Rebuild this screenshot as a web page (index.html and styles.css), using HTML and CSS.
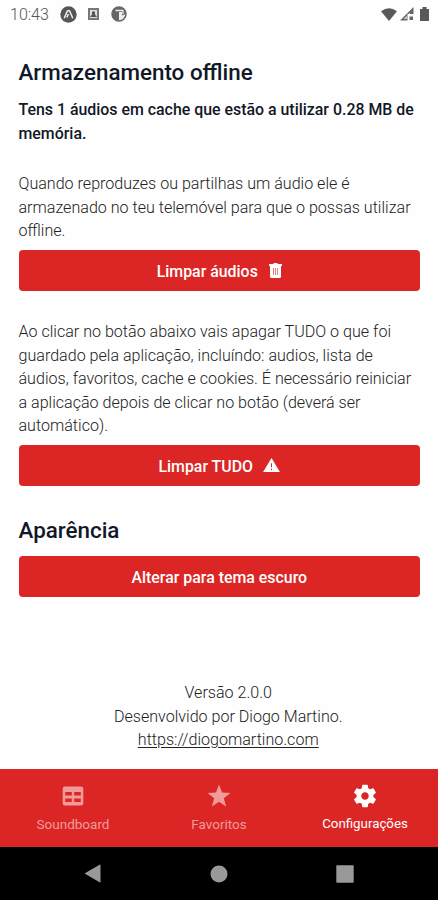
FILE: index.html
```html
<!DOCTYPE html>
<html lang="pt">
<head>
    <meta charset="UTF-8">
    <title>Configurações</title>
    <link rel="stylesheet" href="styles.css">
</head>
<body>
<!-- Barra de estado -->
<header class="status-bar">
    <span class="clock">10:43</span>
    <svg class="status-icon" width="17" height="17" viewBox="0 0 17 17">
        <circle cx="8.5" cy="8.5" r="8.2" fill="#555"/>
        <path d="M4.2 12.3 7.3 5.2Q8.5 3.8 9.7 5.2L12.8 12.3M8.5 8 6.8 11.5" fill="none" stroke="#eee" stroke-width="1.5"/>
    </svg>
    <svg class="status-icon square" width="11" height="12" viewBox="0 0 11 12">
        <rect x="1" y="1" width="9" height="10" fill="#ddd" stroke="#777" stroke-width="2"/>
        <path d="M2 9 4 6.500 4 4 5.500 3 7 4 7 6.500 9 9Z" fill="#555"/>
    </svg>
    <svg class="status-icon" width="16" height="16" viewBox="0 0 16 16">
        <circle cx="8" cy="8" r="7" fill="#eee" stroke="#666" stroke-width="1.5"/>
        <path d="M8 1A7 7 0 0 0 8 15V6H11V9.500L15 8A7 7 0 0 0 8 1Z" fill="#666"/>
        <path d="M4.500 4.500H12V8" fill="none" stroke="#eee" stroke-width="1.300"/>
    </svg>
    <div class="signals">
        <svg width="16" height="13" viewBox="0 0 16 13"><path d="M0 3.200Q8-2.800 16 3.200L8 13Z" fill="#595959"/></svg>
        <svg width="14" height="14" viewBox="0 0 14 14"><path d="M0 13.500 13.500 0V7H7.500V13.500Z" fill="#666"/><path d="M3.500 12 10 5.500V8H7V12Z" fill="#fff" opacity=".65"/><rect x="9.500" y="9.500" width="3.500" height="3.500" fill="#666"/></svg>
        <svg width="9" height="14" viewBox="0 0 9 14"><path d="M0 2H2.500V0H6.500V2H9V14H0Z" fill="#595959"/></svg>
    </div>
</header>

<!-- Conteúdo principal -->
<main class="content">
    <h2>Armazenamento offline</h2>
    <p class="cache-info">Tens 1 áudios em cache que estão a utilizar 0.28 MB de<br>memória.</p>
    <p>Quando reproduzes ou partilhas um áudio ele é<br>armazenado no teu telemóvel para que o possas utilizar<br>offline.</p>
    <button class="button">
        <span>Limpar áudios</span>
        <svg class="trash" width="13" height="15" viewBox="0 0 13 15">
            <path d="M0 1H4L5 0H8L9 1H13V3H12V13.500Q12 15 10.500 15H2.500Q1 15 1 13.500V3H0Z" fill="#fff"/>
            <path d="M4.500 5V12M6.500 5V12M8.500 5V12" stroke="#dc2626" stroke-width=".6"/>
        </svg>
    </button>
    <p class="reset-info">Ao clicar no botão abaixo vais apagar TUDO o que foi<br>guardado pela aplicação, incluíndo: audios, lista de<br>áudios, favoritos, cache e cookies. É necessário reiniciar<br>a aplicação depois de clicar no botão (deverá ser<br>automático).</p>
    <button class="button">
        <span>Limpar TUDO</span>
        <svg class="warning" width="17" height="14" viewBox="0 0 18 15">
            <path d="M9 0 18 15H0Z" fill="#fff"/>
            <path d="M9 5.500V10M9 11.500V13" stroke="#dc2626" stroke-width="1.100"/>
        </svg>
    </button>
    <h2 class="appearance">Aparência</h2>
    <button class="button"><span>Alterar para tema escuro</span></button>
    <footer class="about">
        <div>Versão 2.0.0</div>
        <div>Desenvolvido por Diogo Martino.</div>
        <a href="https://diogomartino.com">https://diogomartino.com</a>
    </footer>
</main>

<!-- Separadores -->
<nav class="tabs">
    <a class="tab" href="#">
        <svg width="24" height="24" viewBox="0 0 24 24"><path fill-rule="evenodd" d="M4 2.500H20Q22.300 2.500 22.300 4.800V19.200Q22.300 21.500 20 21.500H4Q1.700 21.500 1.700 19.200V4.800Q1.700 2.500 4 2.500ZM4.200 8V11.500H10.800V8ZM13.200 8V11.500H19.800V8ZM4.200 14.500V18H10.800V14.500ZM13.200 14.500V18H19.800V14.500Z" fill="currentColor"/></svg>
        <span>Soundboard</span>
    </a>
    <a class="tab" href="#">
        <svg width="24" height="24" viewBox="0 0 24 24"><path d="M12 .5 15 8.600 23.500 9 16.800 14.200 19.100 22.500 12 17.700 4.900 22.500 7.200 14.200.5 9 9 8.600Z" fill="currentColor"/></svg>
        <span>Favoritos</span>
    </a>
    <a class="tab active" href="#">
        <svg width="28" height="28" viewBox="0 0 24 24"><path d="M19.140 12.940c.04-.3.060-.61.060-.94 0-.32-.02-.64-.07-.94l2.030-1.580c.18-.14.230-.41.120-.61l-1.920-3.320c-.12-.22-.37-.29-.59-.22l-2.390.960c-.5-.38-1.030-.7-1.620-.94l-.36-2.540c-.04-.24-.24-.41-.48-.41h-3.840c-.24 0-.43.170-.47.410l-.36 2.540c-.59.240-1.130.570-1.620.940l-2.390-.96c-.22-.08-.47 0-.59.220L2.740 8.870c-.12.210-.08.470.120.610l2.030 1.580c-.05.300-.09.630-.09.940s.02.640.07.940l-2.030 1.580c-.18.140-.23.410-.12.610l1.920 3.320c.12.220.37.290.59.220l2.390-.96c.5.380 1.030.700 1.620.940l.36 2.540c.05.240.240.410.480.410h3.840c.24 0 .44-.17.470-.41l.36-2.540c.59-.24 1.130-.56 1.620-.94l2.390.960c.22.080.47 0 .59-.22l1.920-3.320c.12-.22.070-.47-.12-.61zM12 15.200c-1.760 0-3.200-1.440-3.200-3.200s1.440-3.200 3.200-3.200 3.200 1.440 3.200 3.200-1.440 3.200-3.200 3.200z" fill="currentColor"/></svg>
        <span>Configurações</span>
    </a>
</nav>

<!-- Navegação do sistema -->
<div class="system-nav">
    <svg width="17" height="19" viewBox="0 0 17 19"><path d="M16 .5Q16.500.5 16.500 1V18Q16.500 18.500 16 18.500L.5 9.500Z" fill="#999"/></svg>
    <svg width="18" height="18" viewBox="0 0 18 18"><circle cx="9" cy="9" r="8.500" fill="#999"/></svg>
    <svg width="18" height="18" viewBox="0 0 18 18"><rect x=".3" y=".3" width="17.400" height="17.400" rx="1" fill="#999"/></svg>
</div>
</body>
</html>
```
FILE: styles.css
```css
* {
    box-sizing: border-box;
}

body {
    margin: 0;
    height: 900px;
    display: flex;
    flex-direction: column;
    overflow: hidden;
    background-color: #fefefe;
    font-family: Roboto, sans-serif;
    white-space: nowrap;
}

/* Barra de estado */
.status-bar {
    height: 28px;
    display: flex;
    align-items: center;
    padding: 0 9px 0 10px;
}

.clock {
    width: 50px;
    font-size: 16px;
    font-weight: 300;
    color: #555;
}

.square {
    margin: 0 12px 0 11px;
}

.signals {
    display: flex;
    align-items: center;
    gap: 3px;
    margin-left: auto;
}

.signals svg:last-child {
    margin-left: 3px;
}

/* Conteúdo principal */
.content {
    flex: 1;
    padding: 31px 18px 0 18.5px;
}

h2 {
    margin: 0;
    font-size: 22.4px;
    line-height: 27px;
    font-weight: 500;
    color: #111827;
}

p {
    margin: 0;
    font-size: 16.08px;
    line-height: 23.6px;
    font-weight: 300;
    color: #222;
}

.cache-info {
    margin: 12px 0 27px;
    font-size: 15.9px;
    font-weight: 500;
    color: #111827;
}

.button {
    display: flex;
    align-items: center;
    justify-content: center;
    gap: 11px;
    width: 100%;
    height: 41px;
    margin: 7px 0 0;
    padding: 2px 0 0;
    border: none;
    border-radius: 4px;
    background-color: #dc2626;
    color: #fff;
    font-family: inherit;
    font-size: 15.9px;
    font-weight: 500;
}

.warning {
    margin: -2px 0 0 -1px;
}

.trash {
    margin-top: -2px;
}

.reset-info {
    margin-top: 29px;
}

.appearance {
    margin-top: 31px;
}

.appearance + .button {
    margin-top: 12px;
}

.about {
    display: flex;
    flex-direction: column;
    align-items: center;
    margin-top: 84px;
    padding-left: 18px;
    font-size: 16.08px;
    line-height: 23.6px;
    font-weight: 300;
    color: #222;
}

.about a {
    color: inherit;
    text-underline-offset: 2px;
}

/* Separadores */
.tabs {
    height: 78.5px;
    display: flex;
    background-color: #dc2626;
}

.tab {
    flex: 1;
    display: flex;
    flex-direction: column;
    align-items: center;
    padding-top: 13px;
    color: #f19a9a;
    font-size: 13.5px;
    line-height: 16px;
    text-decoration: none;
}

.tab svg {
    height: 28px;
    margin-bottom: 6px;
}

.tab.active {
    color: #fff;
    font-size: 13.3px;
}

/* Navegação do sistema */
.system-nav {
    height: 53px;
    display: flex;
    align-items: center;
    justify-content: space-between;
    padding: 0 84px 0 84px;
    background-color: #000;
}
```
